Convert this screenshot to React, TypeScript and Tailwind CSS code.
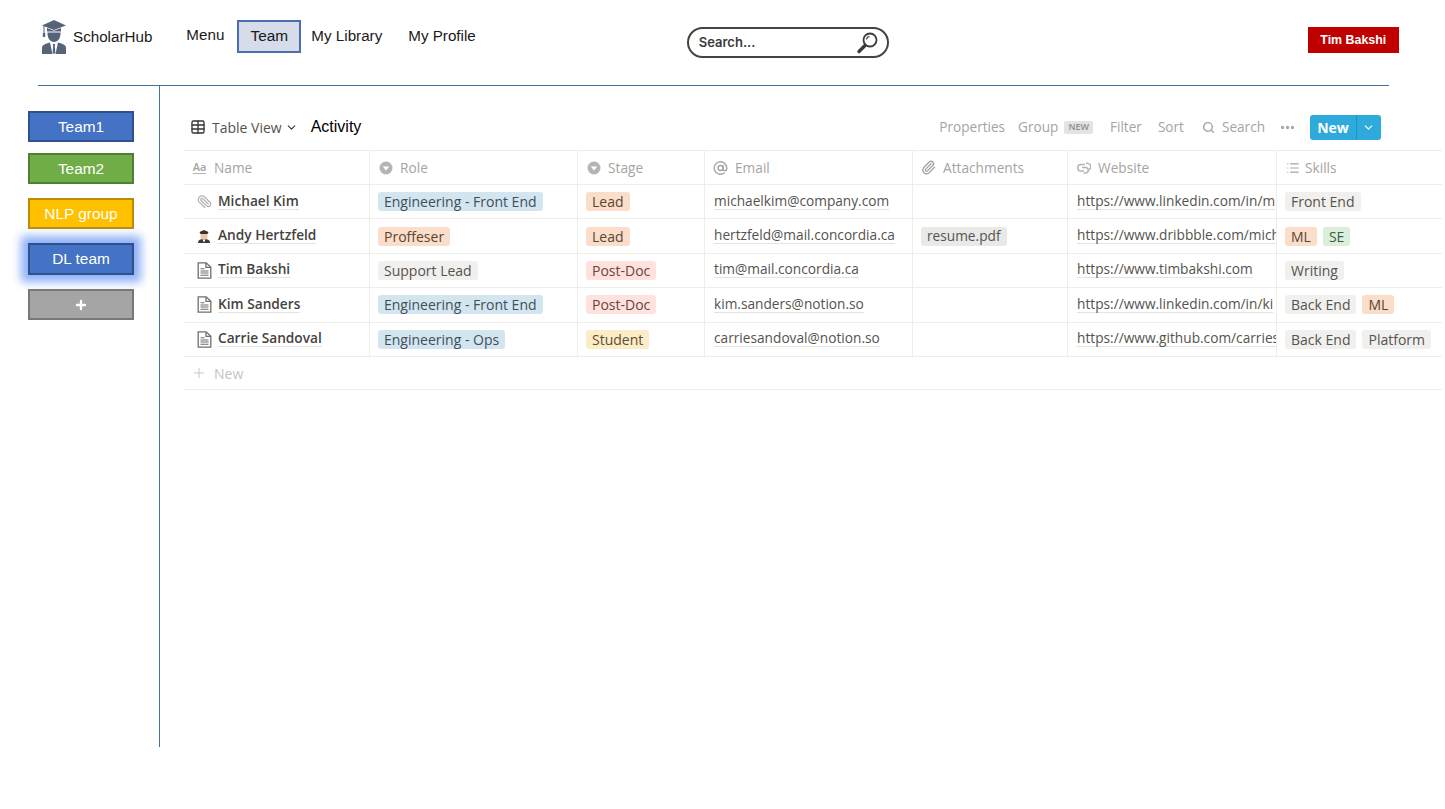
import { Table, ChevronDown, Search, Paperclip, AtSign, List, Plus, MoreHorizontal } from 'lucide-react'

const arial = "font-['Liberation_Sans',Arial,sans-serif]"

type Tag = { label: string; color: string }

const blue = 'bg-[#d3e5ef] text-[#3f4f5c]'
const orange = 'bg-[#fadec9] text-[#5c4433]'
const gray = 'bg-[#f1f0ef] text-[#55534e]'
const red = 'bg-[#ffe2dd] text-[#6b4440]'
const yellow = 'bg-[#fdecc8] text-[#5c4f2e]'
const green = 'bg-[#dbeddb] text-[#3f5a45]'

type Person = {
  name: string
  icon: 'clip' | 'avatar' | 'doc'
  role: Tag
  stage: Tag
  email: string
  attachment?: string
  website: string
  skills: Tag[]
}

const people: Person[] = [
  {
    name: 'Michael Kim',
    icon: 'clip',
    role: { label: 'Engineering - Front End', color: blue },
    stage: { label: 'Lead', color: orange },
    email: 'michaelkim@company.com',
    website: 'https://www.linkedin.com/in/m',
    skills: [{ label: 'Front End', color: gray }],
  },
  {
    name: 'Andy Hertzfeld',
    icon: 'avatar',
    role: { label: 'Proffeser', color: orange },
    stage: { label: 'Lead', color: orange },
    email: 'hertzfeld@mail.concordia.ca',
    attachment: 'resume.pdf',
    website: 'https://www.dribbble.com/mich',
    skills: [{ label: 'ML', color: orange }, { label: 'SE', color: green }],
  },
  {
    name: 'Tim Bakshi',
    icon: 'doc',
    role: { label: 'Support Lead', color: gray },
    stage: { label: 'Post-Doc', color: red },
    email: 'tim@mail.concordia.ca',
    website: 'https://www.timbakshi.com',
    skills: [{ label: 'Writing', color: gray }],
  },
  {
    name: 'Kim Sanders',
    icon: 'doc',
    role: { label: 'Engineering - Front End', color: blue },
    stage: { label: 'Post-Doc', color: red },
    email: 'kim.sanders@notion.so',
    website: 'https://www.linkedin.com/in/ki',
    skills: [{ label: 'Back End', color: gray }, { label: 'ML', color: orange }],
  },
  {
    name: 'Carrie Sandoval',
    icon: 'doc',
    role: { label: 'Engineering - Ops', color: blue },
    stage: { label: 'Student', color: yellow },
    email: 'carriesandoval@notion.so',
    website: 'https://www.github.com/carries',
    skills: [{ label: 'Back End', color: gray }, { label: 'Platform', color: gray }],
  },
]

const teams = [
  { label: 'Team1', cls: 'h-[31px] bg-[#4472c4] border-[#2f528f] mt-[25px]' },
  { label: 'Team2', cls: 'h-[31px] bg-[#70ad47] border-[#507e32] mt-[11px]' },
  { label: 'NLP group', cls: 'h-[31px] bg-[#ffc000] border-[#bc8c00] mt-[14px]' },
  { label: 'DL team', cls: 'h-[32px] bg-[#4472c4] border-[#2f528f] mt-[14px] shadow-[0_0_9px_7px_#8fb0f7]' },
]

function Logo() {
  return (
    <svg width="26" height="34" viewBox="0 0 26 34" fill="#56647a">
      <path d="M13 0 L25 5.5 L13 10 L1 5.5 Z" />
      <path d="M6 8 L13 10.8 L20 8 V11.5 H6 Z" />
      <rect x="2.5" y="6" width="1" height="8" />
      <rect x="1.8" y="13" width="2.4" height="4" />
      <path d="M6.5 12.5 H19.5 C19.8 18 17 22 13 22 C9 22 6.2 18 6.5 12.5 Z" />
      <path d="M1 34 V27.5 C1 25 4 24 9 22.5 L11.5 34 Z" />
      <path d="M25 34 V27.5 C25 25 22 24 17 22.5 L14.5 34 Z" />
      <path d="M11.8 24 H14.2 L13.8 26 L14.4 33.5 H11.6 L12.2 26 Z" />
    </svg>
  )
}

function SearchGlass() {
  return (
    <svg width="23" height="22" viewBox="0 0 22 22" fill="none" stroke="#3a3a3a">
      <circle cx="13.5" cy="8" r="6.5" strokeWidth="1.8" />
      <path d="M8.5 13.5 L2.5 19.5" strokeWidth="3.4" strokeLinecap="round" />
      <path d="M10 7.5 A3.5 3.5 0 0 1 13 4.5" strokeWidth="1.1" />
    </svg>
  )
}

// small solid badge with a down notch, used for the select columns
function SelectIcon() {
  return (
    <svg width="14" height="14" viewBox="0 0 14 14">
      <circle cx="7" cy="7" r="6.5" fill="#b4b4b2" />
      <path d="M3.7 5.5 H10.3 L7 9.5 Z" fill="#fff" />
    </svg>
  )
}

function LinkIcon() {
  return (
    <svg width="15" height="12" viewBox="0 0 15 12" fill="none" stroke="#b4b4b2" strokeWidth="1.5">
      <path d="M9 2.5 H5 A3.2 3.2 0 0 0 5 9 H8" />
      <path d="M6 5.5 H10 A2.8 2.8 0 0 1 10 11 H7.5" />
      <path d="M10 1.5 A3.3 3.3 0 0 1 12.5 8" />
    </svg>
  )
}

function Avatar() {
  return (
    <svg width="14" height="14" viewBox="0 0 14 14">
      <path d="M1 14 C1 11 3 10 7 10 C11 10 13 11 13 14 Z" fill="#3c3c3c" />
      <rect x="3.5" y="3" width="7" height="7.5" rx="2.5" fill="#f0c6a8" />
      <path d="M2.5 3 L7 1 L11.5 3 L10.5 5 H3.5 Z" fill="#3c332c" />
      <rect x="6" y="10.5" width="2" height="2" fill="#fff" />
    </svg>
  )
}

// page with a folded corner and text lines
function DocIcon() {
  return (
    <svg width="15" height="17" viewBox="0 0 15 17" fill="none" stroke="#6f6e6a" strokeWidth="1.3">
      <path d="M1.2 0.8 H9.2 L13.8 5.2 V16.2 H1.2 Z" />
      <path d="M9 1 V5.4 H13.6" />
      <path d="M3.5 6.8 H7.5 M3.5 9 H11.5 M3.5 11 H11.5 M3.5 13.2 H11.5" strokeWidth="1.1" />
    </svg>
  )
}

function Pill({ tag }: { tag: Tag }) {
  return (
    <span className={`inline-flex h-[19px] items-center rounded-[3px] px-[6px] text-[14px] whitespace-nowrap ${tag.color}`}>
      {tag.label}
    </span>
  )
}

const colWidths = ['w-[186px]', 'w-[208px]', 'w-[127px]', 'w-[208px]', 'w-[155px]', 'w-[209px]', 'w-[165px]']

function HeaderCell({ width, icon, label, last }: { width: string; icon: React.ReactNode; label: string; last?: boolean }) {
  return (
    <div className={`flex h-full shrink-0 items-center pl-[8px] ${width} ${last ? 'gap-[5px]' : 'gap-[7px] border-r border-[#ededec]'}`}>
      <span className="flex w-[15px] justify-center">{icon}</span>
      <span className="pt-px text-[13.7px]">{label}</span>
    </div>
  )
}

function Cell({ width, children, last }: { width: string; children?: React.ReactNode; last?: boolean }) {
  return (
    <div className={`flex h-full shrink-0 items-center overflow-hidden pl-[8px] ${width} ${last ? '' : 'border-r border-[#ededec]'}`}>
      {children}
    </div>
  )
}

function Underlined({ children }: { children: React.ReactNode }) {
  return <span className="ml-px -translate-y-px border-b border-[#e3e3e2] text-[13.7px] leading-[17px] whitespace-nowrap">{children}</span>
}

export default function App() {
  return (
    <div className={`h-[809px] w-[1445px] overflow-hidden bg-white ${arial}`}>
      {/* Top bar */}
      <header className="ml-[38px] flex h-[86px] w-[1351px] items-start border-b border-[#41719c] pt-[20px] text-[15px] whitespace-nowrap text-[#1a1a1a]">
        <div className="ml-[3px] flex h-[33px] items-center">
          <Logo />
          <span className="ml-[6px] pt-px text-[15.2px]">ScholarHub</span>
        </div>
        <span className="ml-[34px] mt-[4px] text-[15.2px]">Menu</span>
        <span className="ml-[13px] flex h-[33px] w-[64px] shrink-0 items-center justify-center border-2 border-[#4a6ead] bg-[#d6dce9] text-[15.4px]">
          <span className="-translate-y-px">Team</span>
        </span>
        <span className="ml-[10px] mt-[5px] text-[15.2px]">My Library</span>
        <span className="ml-[26px] mt-[5px] text-[15.2px]">My Profile</span>
        <div className="ml-[211px] mt-[7px] flex h-[31px] w-[202px] shrink-0 items-center justify-between rounded-full border-2 border-[#444] pl-[10px] pr-[8px] font-['Inter',sans-serif] text-[13px] font-semibold text-[#3a3a3a]">
          <span>Search...</span>
          <SearchGlass />
        </div>
        <div className="ml-[419px] mt-[7px] flex h-[26px] w-[91px] shrink-0 items-center justify-center bg-[#c00000] text-[12.4px] font-bold text-white">
          Tim Bakshi
        </div>
      </header>

      <div className="flex">
        {/* Team list */}
        <aside className="flex h-[661px] w-[160px] shrink-0 flex-col items-start border-r border-[#41719c] pl-[28px]">
          {teams.map((t) => (
            <div key={t.label} className={`flex w-[106px] items-center justify-center border-2 text-[15.4px] text-white ${t.cls}`}>
              {t.label}
            </div>
          ))}
          <div className="mt-[14px] flex h-[31px] w-[106px] items-center justify-center border-2 border-[#787878] bg-[#a5a5a5] text-white">
            <Plus size={14} strokeWidth={4} />
          </div>
        </aside>

        {/* Table area */}
        <main className="ml-[24px] w-[1258px] font-['Open_Sans',sans-serif] text-[14px]">
          <div className="flex h-[64px] items-center pt-[18px]">
            <Table size={16} className="ml-[6px] text-[#37352f]" strokeWidth={2} />
            <span className="ml-[6px] text-[14px] font-medium text-[#55534e]">Table View</span>
            <ChevronDown size={13} className="ml-[3px] text-[#37352f]" strokeWidth={2} />
            <span className={`ml-[13px] text-[16px] text-black ${arial}`}>Activity</span>
            <div className="ml-auto mr-[61px] flex items-center text-[13.6px] text-[#a5a4a1]">
              <span>Properties</span>
              <span className="ml-[13px]">Group</span>
              <span className="ml-[6px] flex h-[13px] items-center rounded-[2px] bg-[#e3e3e2] px-[4px] text-[9px] font-semibold text-[#8e8d8a]">NEW</span>
              <span className="ml-[17px]">Filter</span>
              <span className="ml-[16px]">Sort</span>
              <Search size={13} strokeWidth={2.6} className="ml-[18px]" />
              <span className="ml-[7px]">Search</span>
              <MoreHorizontal size={17} strokeWidth={2.6} className="ml-[14px]" />
              <div className="ml-[14px] flex h-[25px] w-[71px] items-center rounded-[3px] bg-[#2eaadc] text-white">
                <span className="flex h-full w-[47px] items-center justify-center border-r border-[#2391bf] text-[14px] font-bold">New</span>
                <ChevronDown size={13} strokeWidth={2.2} className="ml-[5px]" />
              </div>
            </div>
          </div>

          {/* Column headers */}
          <div className="flex h-[35px] items-stretch border-y border-[#ededec] text-[#a5a4a1]">
            <HeaderCell width={colWidths[0]} label="Name" icon={<span className="border-b border-[#b4b4b2] text-[11px] leading-[12px] font-semibold">Aa</span>} />
            <HeaderCell width={colWidths[1]} label="Role" icon={<SelectIcon />} />
            <HeaderCell width={colWidths[2]} label="Stage" icon={<SelectIcon />} />
            <HeaderCell width={colWidths[3]} label="Email" icon={<AtSign size={16} strokeWidth={2.2} />} />
            <HeaderCell width={colWidths[4]} label="Attachments" icon={<Paperclip size={15} strokeWidth={2.2} />} />
            <HeaderCell width={colWidths[5]} label="Website" icon={<LinkIcon />} />
            <HeaderCell width={colWidths[6]} label="Skills" icon={<List size={14} strokeWidth={2} />} last />
          </div>

          {people.map((p) => (
            <div key={p.name} className="flex h-[34.4px] items-stretch border-b border-[#ededec] text-[#55534e]">
              <Cell width={colWidths[0]}>
                <span className="mr-[6px] ml-[4px] flex w-[16px] justify-center">
                  {p.icon === 'clip' && <Paperclip size={15} className="rotate-90 text-[#b4b4b2]" strokeWidth={2} />}
                  {p.icon === 'avatar' && <Avatar />}
                  {p.icon === 'doc' && <DocIcon />}
                </span>
                <span className="-translate-y-px border-b border-[#e3e3e2] text-[13.7px] leading-[17px] font-semibold text-[#45433e]">{p.name}</span>
              </Cell>
              <Cell width={colWidths[1]}>
                <Pill tag={p.role} />
              </Cell>
              <Cell width={colWidths[2]}>
                <Pill tag={p.stage} />
              </Cell>
              <Cell width={colWidths[3]}>
                <Underlined>{p.email}</Underlined>
              </Cell>
              <Cell width={colWidths[4]}>
                {p.attachment && (
                  <span className="inline-flex h-[19px] items-center rounded-[3px] bg-[#e9e9e7] px-[6px] text-[13.7px] whitespace-nowrap">{p.attachment}</span>
                )}
              </Cell>
              <Cell width={colWidths[5]}>
                <Underlined>{p.website}</Underlined>
              </Cell>
              <Cell width={colWidths[6]} last>
                <div className="flex gap-[6px]">
                  {p.skills.map((s) => (
                    <Pill key={s.label} tag={s} />
                  ))}
                </div>
              </Cell>
            </div>
          ))}

          <div className="flex h-[33px] items-center gap-[7px] border-b border-[#ededec] pl-[7px] pt-px text-[14px] text-[#c4c4c2]">
            <Plus size={16} strokeWidth={1.4} />
            <span>New</span>
          </div>
        </main>
      </div>
    </div>
  )
}
